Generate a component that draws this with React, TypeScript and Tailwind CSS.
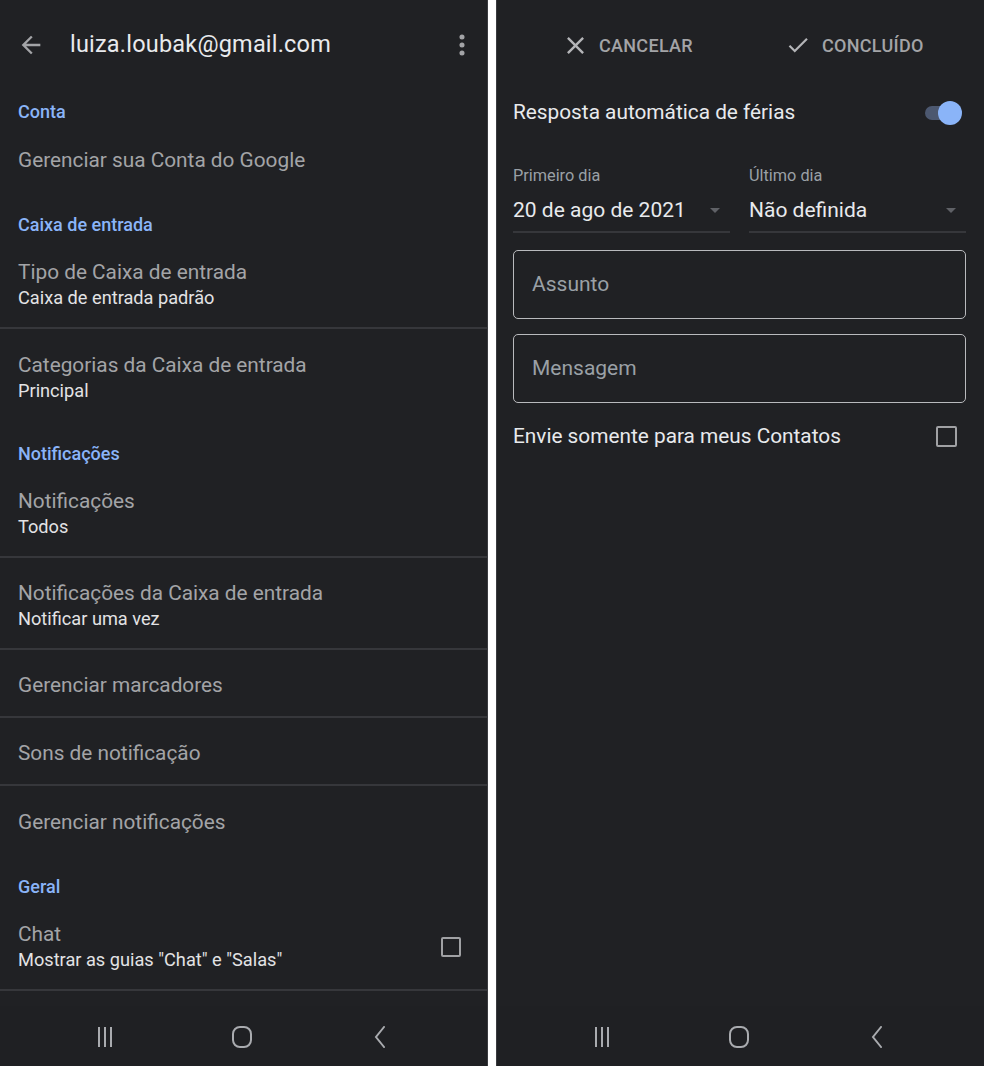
import React from 'react';

function NavBar() {
  return (
    <div className="h-[60px] pt-[2px] flex items-center pl-[85px] bg-[#1f2023]">
      {/* recent apps */}
      <div className="w-[40px] flex justify-center">
        <svg width="16" height="22" viewBox="0 0 16 22" fill="none" stroke="#a9abaf" strokeWidth="2">
          <line x1="2" y1="1" x2="2" y2="21" />
          <line x1="8" y1="1" x2="8" y2="21" />
          <line x1="14" y1="1" x2="14" y2="21" />
        </svg>
      </div>
      {/* home */}
      <div className="w-[40px] flex justify-center ml-[97px]">
        <svg width="22" height="22" viewBox="0 0 22 22" fill="none" stroke="#a9abaf" strokeWidth="2">
          <rect x="2" y="1" width="18" height="20" rx="7" />
        </svg>
      </div>
      {/* back */}
      <div className="w-[40px] flex justify-center ml-[98px]">
        <svg width="14" height="22" viewBox="0 0 14 22" fill="none" stroke="#a9abaf" strokeWidth="2" strokeLinecap="round">
          <polyline points="11,1 3,11 11,21" />
        </svg>
      </div>
    </div>
  );
}

function SectionHeader({ label, first }: { label: string; first?: boolean }) {
  return (
    <div className={`${first ? 'h-[34px]' : 'h-[45px]'} flex items-end pb-[2px] pl-[18px]`}>
      <span className="text-[18px] leading-5 font-medium text-[#8ab4f8]">{label}</span>
    </div>
  );
}

function Item({ title, sub, divider, checkbox }: { title: string; sub?: string; divider?: boolean; checkbox?: boolean }) {
  return (
    <div
      className={`${sub ? 'h-[92px] pt-[6px]' : 'h-[68px] pt-[3px]'} flex items-center pl-[18px] pr-[26px] ${
        divider ? 'border-b-2 border-[#36373b]' : ''
      }`}
    >
      <div className="flex-1">
        <div className="text-[20.8px] leading-[26px] text-[#a3a4a7]">{title}</div>
        {sub && <div className="text-[18.2px] leading-[26px] text-[#e3e3e5]">{sub}</div>}
      </div>
      {checkbox && <div className="w-[20px] h-[20px] border-2 border-[#a0a1a4] rounded-[2px]" />}
    </div>
  );
}

function SettingsPanel() {
  return (
    <div className="w-[488px] h-[1066px] flex flex-col bg-[#202124] border-r border-[#3a3b3f]">
      <div className="h-[90px] flex items-center">
        <svg className="ml-[17px]" width="28" height="28" viewBox="0 0 24 24" fill="#a3a4a7">
          <path d="M20 11H7.83l5.59-5.59L12 4l-8 8 8 8 1.41-1.41L7.83 13H20v-2z" />
        </svg>
        <span className="ml-[25px] text-[23.5px] text-[#e8eaed] tracking-[0.2px]">luiza.loubak@gmail.com</span>
        <svg className="ml-auto mr-[9px]" width="32" height="32" viewBox="0 0 24 24" fill="#a3a4a7">
          <circle cx="12" cy="6" r="1.9" />
          <circle cx="12" cy="12" r="1.9" />
          <circle cx="12" cy="18" r="1.9" />
        </svg>
      </div>

      <SectionHeader label="Conta" first />
      <Item title="Gerenciar sua Conta do Google" />

      <SectionHeader label="Caixa de entrada" />
      <Item title="Tipo de Caixa de entrada" sub="Caixa de entrada padrão" divider />
      <Item title="Categorias da Caixa de entrada" sub="Principal" />

      <SectionHeader label="Notificações" />
      <Item title="Notificações" sub="Todos" divider />
      <Item title="Notificações da Caixa de entrada" sub="Notificar uma vez" divider />
      <Item title="Gerenciar marcadores" divider />
      <Item title="Sons de notificação" divider />
      <Item title="Gerenciar notificações" />

      <SectionHeader label="Geral" />
      <Item title="Chat" sub={'Mostrar as guias "Chat" e "Salas"'} divider checkbox />

      <div className="flex-1" />
      <NavBar />
    </div>
  );
}

function DateField({ label, value }: { label: string; value: string }) {
  return (
    <div className="w-[217px] border-b-2 border-[#36373b] pb-[7px]">
      <div className="text-[16.3px] leading-5 text-[#9aa0a6]">{label}</div>
      <div className="mt-[10px] flex items-center">
        <span className="flex-1 text-[21px] leading-7 text-[#e8eaed]">{value}</span>
        <svg className="mr-[3px]" width="24" height="24" viewBox="0 0 24 24" fill="#5f6166">
          <path d="M7 10l5 5 5-5z" />
        </svg>
      </div>
    </div>
  );
}

function VacationPanel() {
  return (
    <div className="w-[488px] h-[1066px] flex flex-col bg-[#202124] border-l border-[#3a3b3f]">
      <div className="h-[90px] flex items-center">
        <div className="w-[222px] pl-[64px] flex items-center gap-[9px]">
          <svg width="29" height="29" viewBox="0 0 24 24" fill="#b4b5b8">
            <path d="M19 6.41L17.59 5 12 10.59 6.41 5 5 6.41 10.59 12 5 17.59 6.41 19 12 13.41 17.59 19 19 17.59 13.41 12z" />
          </svg>
          <span className="text-[18px] font-medium text-[#a3a4a7] tracking-[0.3px]">CANCELAR</span>
        </div>
        <div className="pl-[66px] flex items-center gap-[11px]">
          <svg width="26" height="26" viewBox="0 0 24 24" fill="#b4b5b8">
            <path d="M9 16.17L4.83 12l-1.42 1.41L9 19 21 7l-1.41-1.41z" />
          </svg>
          <span className="text-[18px] font-medium text-[#a3a4a7] tracking-[0.3px]">CONCLUÍDO</span>
        </div>
      </div>

      <div className="h-[44px] pt-[2px] flex items-center pl-[16px] pr-[22px]">
        <span className="flex-1 text-[20.8px] text-[#e8eaed]">Resposta automática de férias</span>
        <div className="relative w-[37px] h-[24px] flex items-center">
          <div className="w-[30px] h-[14px] rounded-full bg-[#4c5870]" />
          <div className="absolute right-0 top-0 w-[24px] h-[24px] rounded-full bg-[#8ab4f8]" />
        </div>
      </div>

      <div className="pl-[16px] pr-[18px]">
        <div className="pt-[32px] flex gap-[19px]">
          <DateField label="Primeiro dia" value="20 de ago de 2021" />
          <DateField label="Último dia" value="Não definida" />
        </div>

        <div className="mt-[17px] h-[69px] border-[1.5px] border-[#b9babd] rounded-[5px] flex items-center pl-[18px]">
          <span className="text-[21px] text-[#9aa0a6]">Assunto</span>
        </div>
        <div className="mt-[15px] h-[69px] border-[1.5px] border-[#b9babd] rounded-[5px] flex items-center pl-[18px]">
          <span className="text-[21px] text-[#9aa0a6]">Mensagem</span>
        </div>

        <div className="mt-[13px] h-[40px] pt-[1px] flex items-center pr-[9px]">
          <span className="flex-1 text-[20.8px] text-[#e8eaed]">Envie somente para meus Contatos</span>
          <div className="w-[21px] h-[21px] border-2 border-[#a0a1a4] rounded-[2px]" />
        </div>
      </div>

      <div className="flex-1" />
      <NavBar />
    </div>
  );
}

export default function App() {
  return (
    <div className="w-[984px] h-[1066px] flex bg-white font-['Roboto','Liberation_Sans',sans-serif] overflow-hidden">
      <SettingsPanel />
      <div className="w-[8px]" />
      <VacationPanel />
    </div>
  );
}
